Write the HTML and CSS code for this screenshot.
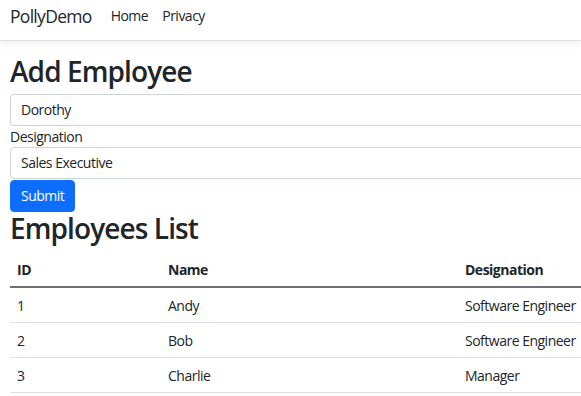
FILE: index.html
```html
<!DOCTYPE html>
<html lang="en">
<head>
    <meta charset="UTF-8">
    <meta name="viewport" content="width=device-width, initial-scale=1.0">
    <title>Add Employee - PollyDemo</title>
    <link rel="stylesheet" href="styles.css">
</head>
<body>
    <header class="navbar">
        <a class="navbar-brand" href="#">PollyDemo</a>
        <nav class="nav-links">
            <a class="nav-link" href="#">Home</a>
            <a class="nav-link" href="#">Privacy</a>
        </nav>
    </header>

    <main class="container">
        <h1>Add Employee</h1>
        <form class="employee-form" onsubmit="return false;">
            <input type="text" class="form-control" value="Dorothy">
            <label for="designation">Designation</label>
            <input type="text" id="designation" class="form-control" value="Sales Executive">
            <button type="submit" class="btn-primary">Submit</button>
        </form>

        <h1>Employees List</h1>
        <table class="table">
            <thead>
                <tr>
                    <th class="col-id">ID</th>
                    <th class="col-name">Name</th>
                    <th>Designation</th>
                </tr>
            </thead>
            <tbody>
                <tr>
                    <td>1</td>
                    <td>Andy</td>
                    <td>Software Engineer</td>
                </tr>
                <tr>
                    <td>2</td>
                    <td>Bob</td>
                    <td>Software Engineer</td>
                </tr>
                <tr>
                    <td>3</td>
                    <td>Charlie</td>
                    <td>Manager</td>
                </tr>
            </tbody>
        </table>
    </main>
</body>
</html>
```

FILE: styles.css
```css
body {
    font-family: "Segoe UI", "Open Sans", Arial, sans-serif;
    font-size: 14px;
    line-height: 1.5;
    letter-spacing: -0.5px;
    color: #212529;
    background-color: #fff;
    margin: 0;
    padding: 0;
    overflow: hidden;
}

a {
    color: #212529;
    text-decoration: none;
}

.navbar {
    display: flex;
    align-items: flex-start;
    box-sizing: border-box;
    height: 41px;
    padding: 3px 10px 0;
    border-bottom: 1px solid #dee2e6;
    box-shadow: 0 3px 8px rgba(0, 0, 0, 0.06);
    margin-bottom: 14px;
}

.navbar-brand {
    font-size: 17.5px;
    line-height: 26px;
    letter-spacing: -0.7px;
    margin-right: 12px;
}

.nav-links {
    display: flex;
    padding-top: 1px;
}

.nav-link {
    line-height: 24px;
    padding: 0 7px;
}

.container {
    width: 760px;
    padding: 0 10px;
}

h1 {
    font-size: 28px;
    font-weight: 600;
    line-height: 1.2;
    letter-spacing: -0.9px;
    margin: 0 0 5px;
}

.employee-form {
    display: flex;
    flex-direction: column;
    align-items: flex-start;
}

.form-control {
    width: 100%;
    box-sizing: border-box;
    height: 32px;
    padding: 5px 10px;
    font-family: inherit;
    font-size: 14px;
    letter-spacing: -0.5px;
    color: #212529;
    border: 1px solid #ced4da;
    border-radius: 4px;
    margin: 0;
}

label {
    line-height: 21px;
}

.btn-primary {
    height: 32px;
    margin-top: 1px;
    padding: 5px 10px;
    font-family: inherit;
    font-size: 14px;
    letter-spacing: -0.5px;
    color: #fff;
    background-color: #0d6efd;
    border: 1px solid #0d6efd;
    border-radius: 4px;
    cursor: pointer;
}

.table {
    width: 100%;
    border-collapse: collapse;
    margin-top: 7px;
}

.table th,
.table td {
    text-align: left;
    padding: 7px 7px 6px;
    border-bottom: 1px solid #dee2e6;
}

.table thead th {
    font-weight: bold;
    border-bottom: 2px solid #707070;
    padding-bottom: 6px;
}

.col-id {
    width: 137px;
}

.col-name {
    width: 283px;
}
```
